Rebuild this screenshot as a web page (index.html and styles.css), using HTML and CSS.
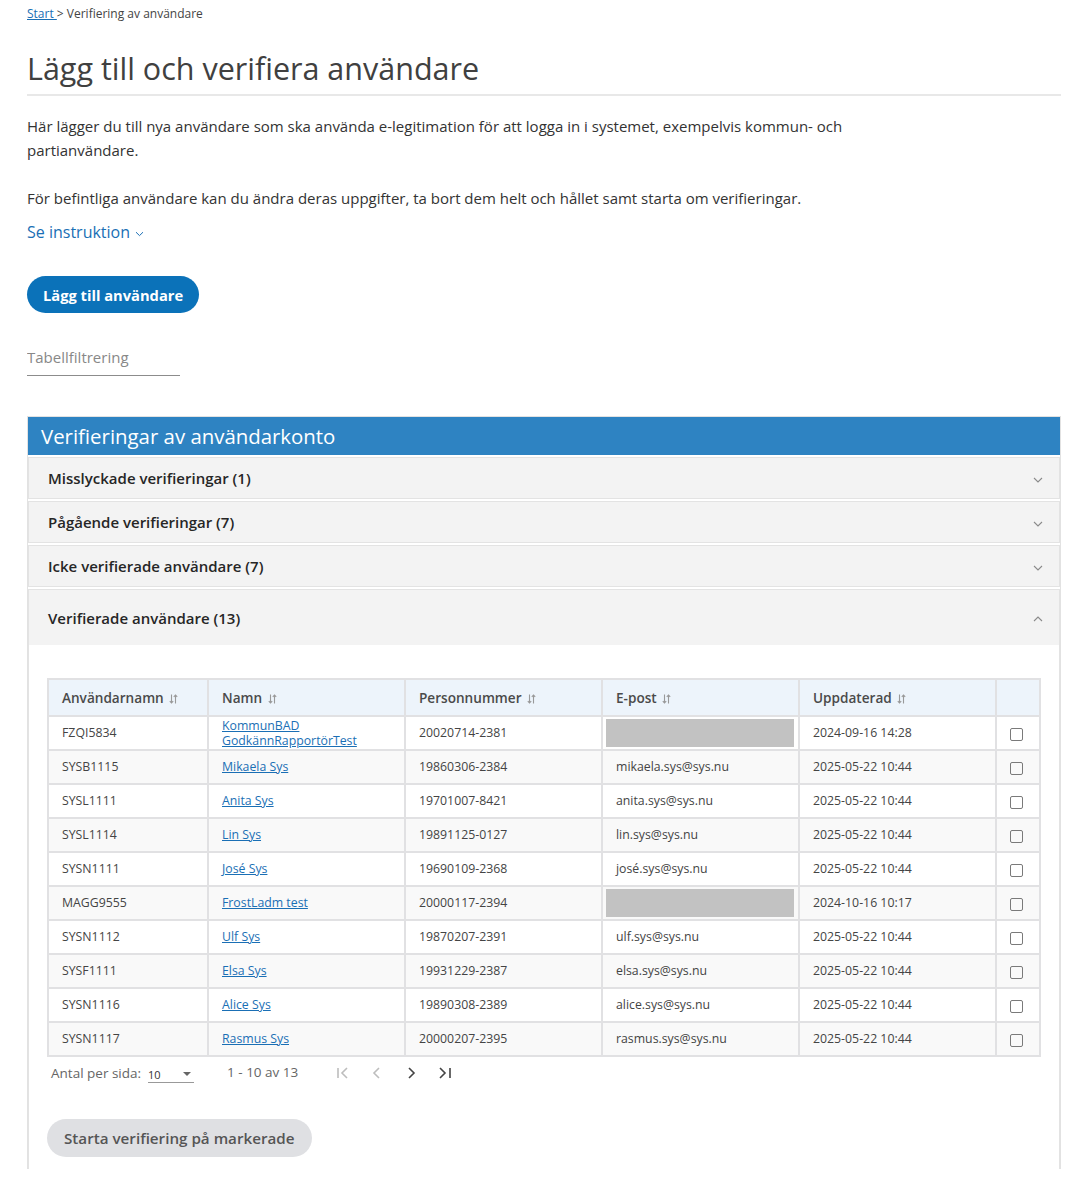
FILE: index.html
```html
<!DOCTYPE html>
<html lang="sv">
<head>
  <meta charset="UTF-8">
  <title>Lägg till och verifiera användare</title>
  <link rel="stylesheet" href="styles.css">
</head>
<body>
  <div class="page">
    <nav class="crumbs"><a href="#">Start </a> &gt; Verifiering av användare</nav>

    <h1>Lägg till och verifiera användare</h1>

    <p class="intro">Här lägger du till nya användare som ska använda e-legitimation för att logga in i systemet, exempelvis kommun- och partianvändare.</p>
    <p class="intro second">För befintliga användare kan du ändra deras uppgifter, ta bort dem helt och hållet samt starta om verifieringar.</p>

    <a class="toggle" href="#">Se instruktion
      <svg width="9" height="6" viewBox="0 0 9 6"><path d="M1 1.2 4.5 4.6 8 1.2" fill="none" stroke="#1a6fb5" stroke-width="1"/></svg>
    </a>

    <div><button class="btn-primary" type="button">Lägg till användare</button></div>

    <div class="filter"><input type="text" placeholder="Tabellfiltrering"></div>

    <section class="panel">
      <h2 class="panel-title">Verifieringar av användarkonto</h2>

      <div class="acc-item">
        <span>Misslyckade verifieringar (1)</span>
        <svg class="chev" width="10" height="6" viewBox="0 0 10 6"><path d="M1 1 5 5 9 1" fill="none" stroke="#8a8a8a" stroke-width="1.1"/></svg>
      </div>
      <div class="acc-item">
        <span>Pågående verifieringar (7)</span>
        <svg class="chev" width="10" height="6" viewBox="0 0 10 6"><path d="M1 1 5 5 9 1" fill="none" stroke="#8a8a8a" stroke-width="1.1"/></svg>
      </div>
      <div class="acc-item">
        <span>Icke verifierade användare (7)</span>
        <svg class="chev" width="10" height="6" viewBox="0 0 10 6"><path d="M1 1 5 5 9 1" fill="none" stroke="#8a8a8a" stroke-width="1.1"/></svg>
      </div>

      <div class="acc-open">
        <div class="acc-item open">
          <span>Verifierade användare (13)</span>
          <svg class="chev" width="10" height="6" viewBox="0 0 10 6"><path d="M1 5 5 1 9 5" fill="none" stroke="#8a8a8a" stroke-width="1.1"/></svg>
        </div>

        <div class="acc-body">
          <table class="users">
            <colgroup>
              <col style="width:160px"><col style="width:197px"><col style="width:197px">
              <col style="width:197px"><col style="width:197px"><col style="width:44px">
            </colgroup>
            <thead>
              <tr>
                <th>Användarnamn <svg class="sort" width="9" height="10" viewBox="0 0 9 10"><path d="M2.5 0.5v8.5M0.8 7.2 2.5 9 4.2 7.2M6.5 9.5V1M4.8 2.8 6.5 1 8.2 2.8" fill="none" stroke="#999" stroke-width="1.1"/></svg></th>
                <th>Namn <svg class="sort" width="9" height="10" viewBox="0 0 9 10"><path d="M2.5 0.5v8.5M0.8 7.2 2.5 9 4.2 7.2M6.5 9.5V1M4.8 2.8 6.5 1 8.2 2.8" fill="none" stroke="#999" stroke-width="1.1"/></svg></th>
                <th>Personnummer <svg class="sort" width="9" height="10" viewBox="0 0 9 10"><path d="M2.5 0.5v8.5M0.8 7.2 2.5 9 4.2 7.2M6.5 9.5V1M4.8 2.8 6.5 1 8.2 2.8" fill="none" stroke="#999" stroke-width="1.1"/></svg></th>
                <th>E-post <svg class="sort" width="9" height="10" viewBox="0 0 9 10"><path d="M2.5 0.5v8.5M0.8 7.2 2.5 9 4.2 7.2M6.5 9.5V1M4.8 2.8 6.5 1 8.2 2.8" fill="none" stroke="#999" stroke-width="1.1"/></svg></th>
                <th>Uppdaterad <svg class="sort" width="9" height="10" viewBox="0 0 9 10"><path d="M2.5 0.5v8.5M0.8 7.2 2.5 9 4.2 7.2M6.5 9.5V1M4.8 2.8 6.5 1 8.2 2.8" fill="none" stroke="#999" stroke-width="1.1"/></svg></th>
                <th></th>
              </tr>
            </thead>
            <tbody>
              <tr>
                <td>FZQI5834</td>
                <td class="two-line"><a href="#">KommunBAD GodkännRapportörTest</a></td>
                <td>20020714-2381</td>
                <td class="masked"><span class="mask"></span></td>
                <td>2024-09-16 14:28</td>
                <td class="check"><span class="box"></span></td>
              </tr>
              <tr>
                <td>SYSB1115</td>
                <td><a href="#">Mikaela Sys</a></td>
                <td>19860306-2384</td>
                <td>mikaela.sys@sys.nu</td>
                <td>2025-05-22 10:44</td>
                <td class="check"><span class="box"></span></td>
              </tr>
              <tr>
                <td>SYSL1111</td>
                <td><a href="#">Anita Sys</a></td>
                <td>19701007-8421</td>
                <td>anita.sys@sys.nu</td>
                <td>2025-05-22 10:44</td>
                <td class="check"><span class="box"></span></td>
              </tr>
              <tr>
                <td>SYSL1114</td>
                <td><a href="#">Lin Sys</a></td>
                <td>19891125-0127</td>
                <td>lin.sys@sys.nu</td>
                <td>2025-05-22 10:44</td>
                <td class="check"><span class="box"></span></td>
              </tr>
              <tr>
                <td>SYSN1111</td>
                <td><a href="#">José Sys</a></td>
                <td>19690109-2368</td>
                <td>josé.sys@sys.nu</td>
                <td>2025-05-22 10:44</td>
                <td class="check"><span class="box"></span></td>
              </tr>
              <tr>
                <td>MAGG9555</td>
                <td><a href="#">FrostLadm test</a></td>
                <td>20000117-2394</td>
                <td class="masked"><span class="mask"></span></td>
                <td>2024-10-16 10:17</td>
                <td class="check"><span class="box"></span></td>
              </tr>
              <tr>
                <td>SYSN1112</td>
                <td><a href="#">Ulf Sys</a></td>
                <td>19870207-2391</td>
                <td>ulf.sys@sys.nu</td>
                <td>2025-05-22 10:44</td>
                <td class="check"><span class="box"></span></td>
              </tr>
              <tr>
                <td>SYSF1111</td>
                <td><a href="#">Elsa Sys</a></td>
                <td>19931229-2387</td>
                <td>elsa.sys@sys.nu</td>
                <td>2025-05-22 10:44</td>
                <td class="check"><span class="box"></span></td>
              </tr>
              <tr>
                <td>SYSN1116</td>
                <td><a href="#">Alice Sys</a></td>
                <td>19890308-2389</td>
                <td>alice.sys@sys.nu</td>
                <td>2025-05-22 10:44</td>
                <td class="check"><span class="box"></span></td>
              </tr>
              <tr>
                <td>SYSN1117</td>
                <td><a href="#">Rasmus Sys</a></td>
                <td>20000207-2395</td>
                <td>rasmus.sys@sys.nu</td>
                <td>2025-05-22 10:44</td>
                <td class="check"><span class="box"></span></td>
              </tr>
            </tbody>
          </table>

          <div class="pager">
            <span class="per-page">Antal per sida:</span>
            <span class="size-select">10
              <svg width="8" height="4" viewBox="0 0 8 4"><path d="M0 0h8L4 4z" fill="#666"/></svg>
            </span>
            <span class="range">1 - 10 av 13</span>
            <span class="nav">
              <svg width="14" height="14" viewBox="0 0 14 14"><path d="M2 2v10M11 2 6 7l5 5" fill="none" stroke="#bdbdbd" stroke-width="1.6"/></svg>
              <svg width="14" height="14" viewBox="0 0 14 14"><path d="M9 2 4 7l5 5" fill="none" stroke="#bdbdbd" stroke-width="1.6"/></svg>
              <svg width="14" height="14" viewBox="0 0 14 14"><path d="M5 2l5 5-5 5" fill="none" stroke="#444" stroke-width="1.6"/></svg>
              <svg width="14" height="14" viewBox="0 0 14 14"><path d="M2 2l5 5-5 5M12 2v10" fill="none" stroke="#444" stroke-width="1.6"/></svg>
            </span>
          </div>

          <button class="btn-secondary" type="button">Starta verifiering på markerade</button>
        </div>
      </div>
    </section>
  </div>
</body>
</html>
```

FILE: styles.css
```css
body {
  margin: 0;
  font-family: "Open Sans", Arial, sans-serif;
  color: #333;
  background: #fff;
}
.page {
  width: 1034px;
  padding: 6px 0 0 27px;
}
.crumbs {
  font-size: 12px;
  line-height: 16px;
  color: #444;
}
.crumbs a {
  color: #1a6fb5;
}
h1 {
  font-size: 30.5px;
  font-weight: 400;
  color: #404040;
  margin: 26px 0 0;
  line-height: 40px;
  padding-bottom: 6px;
  border-bottom: 2px solid #e8e8e8;
}
.intro {
  max-width: 860px;
  font-size: 15px;
  line-height: 24px;
  margin: 18px 0 0;
}
.intro.second {
  margin-top: 24px;
}
.toggle {
  display: inline-flex;
  align-items: center;
  gap: 5px;
  margin-top: 10px;
  font-size: 16px;
  line-height: 24px;
  color: #1a6fb5;
  text-decoration: none;
}
.toggle svg {
  margin-top: 4px;
}
.btn-primary {
  margin-top: 32px;
  height: 37px;
  padding: 0 16px;
  border: none;
  border-radius: 19px;
  background: #0b72b9;
  color: #fff;
  font-family: inherit;
  font-size: 14.7px;
  font-weight: 700;
}
.filter {
  margin-top: 26px;
}
.filter input {
  width: 153px;
  height: 36px;
  padding: 0;
  border: none;
  border-bottom: 1px solid #8c8c8c;
  font-family: inherit;
  font-size: 15px;
  outline: none;
}
.filter input::placeholder {
  color: #888;
}

.panel {
  margin-top: 40px;
  border: 1px solid #e2e2e2;
  border-bottom: none;
}
.panel-title {
  margin: 0;
  height: 38px;
  line-height: 38px;
  padding-left: 13px;
  background: #2e83c2;
  color: #fff;
  font-size: 20.4px;
  font-weight: 400;
}
.acc-item {
  display: flex;
  justify-content: space-between;
  align-items: center;
  height: 40px;
  margin-top: 2px;
  padding: 0 16px 0 19px;
  background: #f3f3f3;
  border: 1px solid #e3e3e3;
  font-size: 15px;
  font-weight: 600;
  color: #262626;
}
.acc-item .chev {
  margin-top: 3px;
}
.acc-item.open {
  height: 55px;
  border-bottom: none;
}
.acc-body {
  padding: 33px 18px 12px;
  border-left: 1px solid #e3e3e3;
  border-right: 1px solid #e3e3e3;
}

.users {
  border-collapse: collapse;
  table-layout: fixed;
  width: 992px;
  font-size: 12.3px;
  color: #444;
}
.users th,
.users td {
  border: 2px solid #e1e1e3;
  text-align: left;
  padding: 0 0 0 13px;
}
.users th {
  height: 35px;
  background: #edf4fb;
  font-size: 13.6px;
  font-weight: 600;
  color: #4a4a4a;
}
.users th .sort {
  margin-left: 2px;
  vertical-align: -1px;
}
.users td {
  height: 32px;
  line-height: 16px;
}
.users tbody tr:nth-child(even) td {
  background: #f9f9f9;
}
.users a {
  color: #1a6fb5;
}
.users td.two-line {
  line-height: 15px;
}
.users td.masked {
  padding: 0;
}
.mask {
  display: block;
  height: 28px;
  margin: 2px 4px 2px 3px;
  background: #c2c2c2;
}
.users td.check {
  padding: 0 4px 0 0;
  text-align: center;
}
.box {
  display: inline-block;
  width: 11px;
  height: 11px;
  border: 1px solid #7a7a7a;
  border-radius: 2px;
  vertical-align: middle;
  margin-top: 3px;
}

.pager {
  display: flex;
  align-items: center;
  height: 32px;
  padding-left: 4px;
  font-size: 13.5px;
  color: #666;
}
.per-page {
  margin-right: 7px;
}
.size-select {
  display: inline-flex;
  justify-content: space-between;
  align-items: center;
  width: 46px;
  margin-top: 3px;
  border-bottom: 1px solid #999;
  font-size: 11px;
  color: #333;
  line-height: 15px;
}
.size-select svg {
  margin-right: 3px;
}
.range {
  margin-left: 33px;
  margin-top: -2px;
}
.nav {
  display: inline-flex;
  gap: 20px;
  margin-left: 38px;
}
.btn-secondary {
  margin-top: 30px;
  height: 38px;
  padding: 0 17px;
  border: none;
  border-radius: 19px;
  background: #dfe0e3;
  color: #555;
  font-family: inherit;
  font-size: 15.2px;
  font-weight: 600;
}
```
